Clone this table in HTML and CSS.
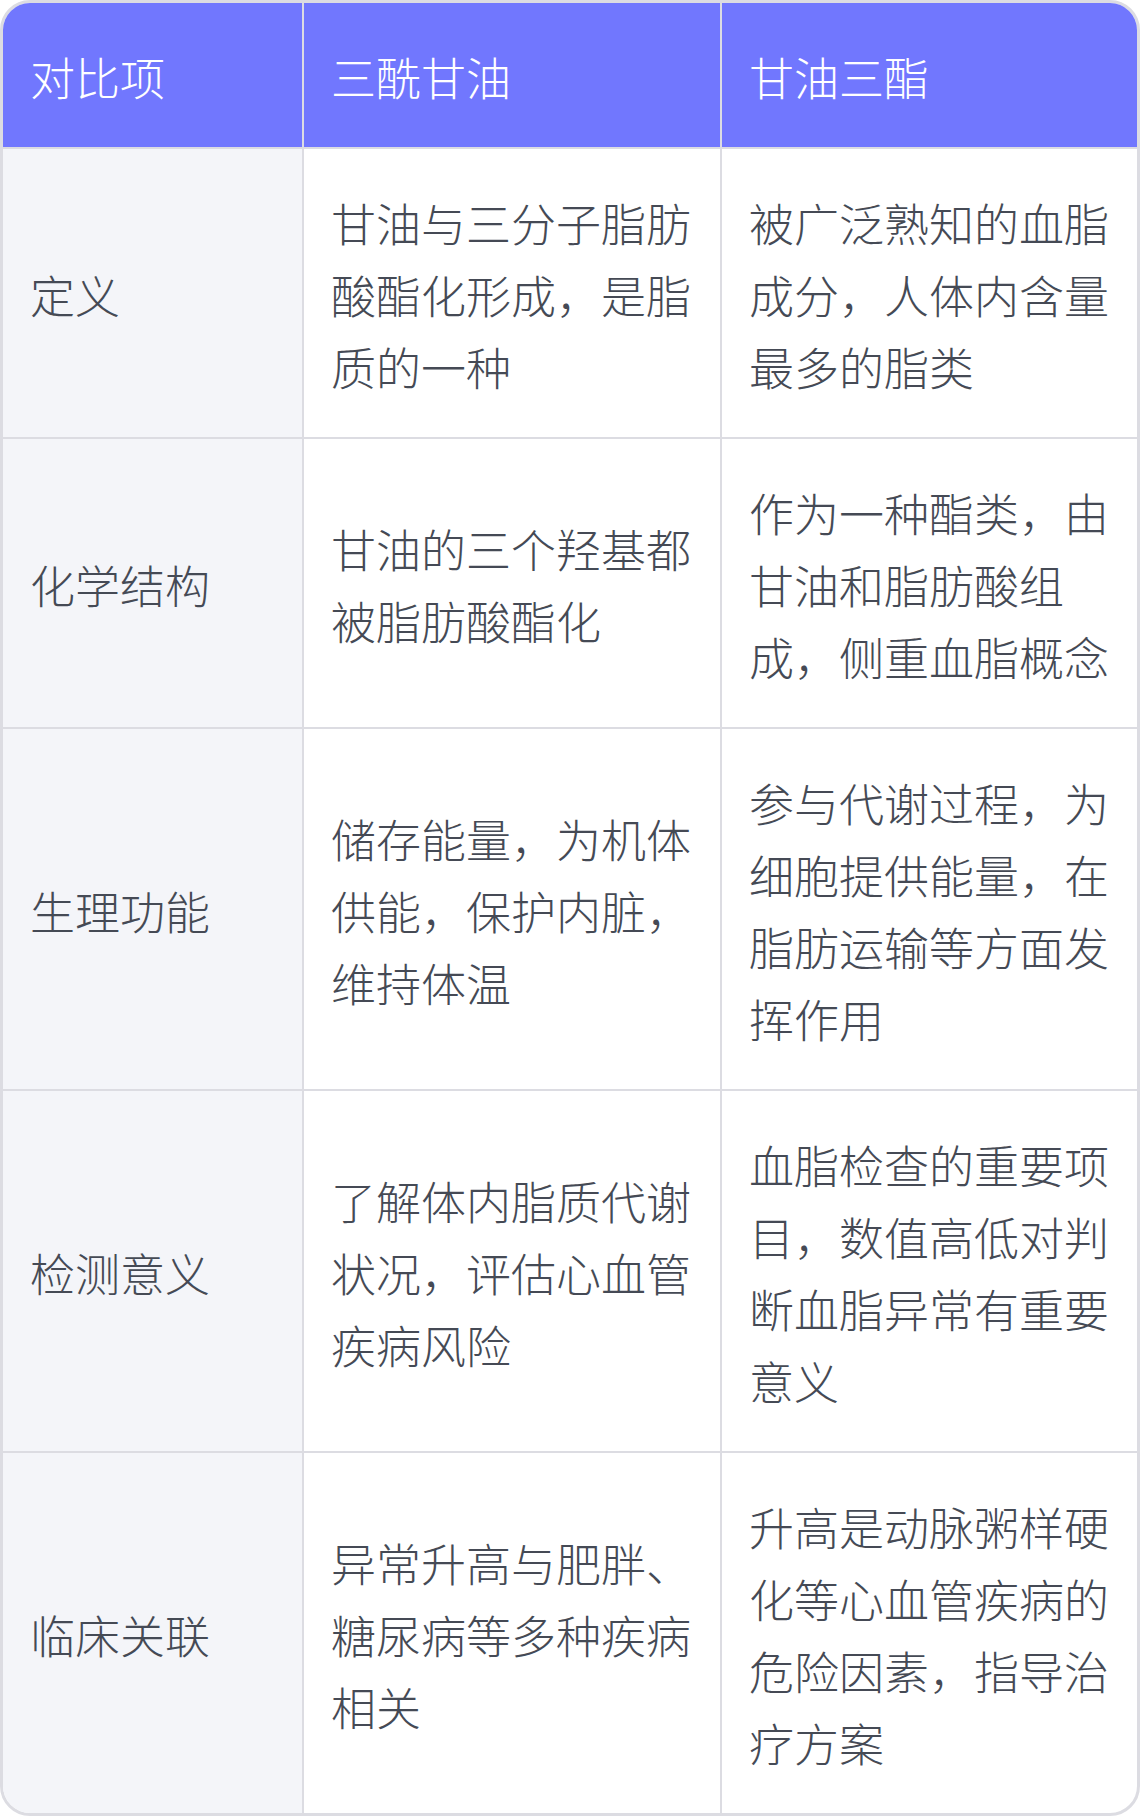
FILE: index.html
```html
<!DOCTYPE html>
<html lang="zh-CN">
<head>
<meta charset="utf-8">
<title>三酰甘油与甘油三酯对比</title>
<link rel="stylesheet" href="styles.css">
</head>
<body>
<div class="card">
  <table class="cmp">
    <colgroup>
      <col class="c1"><col class="c2"><col class="c3">
    </colgroup>
    <thead>
      <tr><th>对比项</th><th>三酰甘油</th><th>甘油三酯</th></tr>
    </thead>
    <tbody>
      <tr><td class="key">定义</td><td>甘油与三分子脂肪酸酯化形成，是脂质的一种</td><td>被广泛熟知的血脂成分，人体内含量最多的脂类</td></tr>
      <tr><td class="key">化学结构</td><td>甘油的三个羟基都被脂肪酸酯化</td><td>作为一种酯类，由甘油和脂肪酸组成，侧重血脂概念</td></tr>
      <tr><td class="key">生理功能</td><td>储存能量，为机体供能，保护内脏，维持体温</td><td>参与代谢过程，为细胞提供能量，在脂肪运输等方面发挥作用</td></tr>
      <tr><td class="key">检测意义</td><td>了解体内脂质代谢状况，评估心血管疾病风险</td><td>血脂检查的重要项目，数值高低对判断血脂异常有重要意义</td></tr>
      <tr><td class="key">临床关联</td><td>异常升高与肥胖、糖尿病等多种疾病相关</td><td>升高是动脉粥样硬化等心血管疾病的危险因素，指导治疗方案</td></tr>
    </tbody>
  </table>
</div>
</body>
</html>
```

FILE: styles.css
```css
html, body {
  margin: 0;
  padding: 0;
  background: #ffffff;
}

.card {
  width: 1140px;
  box-sizing: border-box;
  border: 3px solid #dcdce2;
  border-radius: 30px;
  overflow: hidden;
  background: #ffffff;
}

.cmp {
  width: 100%;
  border-collapse: separate;
  border-spacing: 0;
  table-layout: fixed;
  font-family: "Noto Sans CJK SC", "Noto Sans", sans-serif;
  font-size: 45px;
  line-height: 72px;
  color: #454a55;
}

.c1 { width: 301px; }
.c2 { width: 418px; }
.c3 { width: 415px; }

.cmp th,
.cmp td {
  padding: 38px 27px 34px 27px;
  text-align: left;
  vertical-align: middle;
  border-right: 2px solid #dcdce2;
  border-bottom: 2px solid #dcdce2;
  font-weight: 300;
  word-break: normal;
  line-break: strict;
}

.cmp th:last-child,
.cmp td:last-child {
  border-right: none;
}

.cmp tbody tr:last-child td {
  border-bottom: none;
}

.cmp th {
  background: #7177fe;
  color: #ffffff;
}

.cmp td.key {
  background: #f4f5f9;
}
```
